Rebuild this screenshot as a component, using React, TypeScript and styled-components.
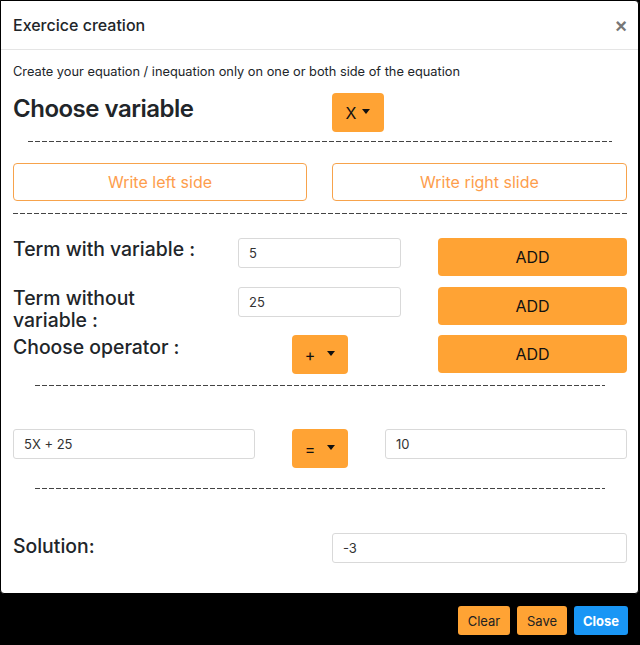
import React from "react";
import styled, { createGlobalStyle } from "styled-components";

const ORANGE = "#ffa334";

const Global = createGlobalStyle`
  html, body { margin: 0; padding: 0; background: #000; }
  body { font-family: Inter, "Liberation Sans", Arial, sans-serif; color: #212529; }
  * { box-sizing: border-box; }
`;

const Page = styled.div`
  width: 640px;
  height: 645px;
  background: #000;
  display: flex;
  flex-direction: column;
`;

const Modal = styled.div`
  width: 639px;
  height: 594px;
  background: #fff;
  border: 1px solid #000;
  border-radius: 0 4px 4px 4px;
  display: flex;
  flex-direction: column;
`;

const Header = styled.div`
  height: 49px;
  border-bottom: 1px solid #e5e5e5;
  display: flex;
  align-items: center;
  justify-content: space-between;
  padding: 0 11px 0 12px;
`;

const Title = styled.h5`
  margin: 0;
  font-size: 16px;
  font-weight: 500;
  color: #212529;
`;

const CloseX = styled.span`
  font-family: "Liberation Sans", Arial, sans-serif;
  font-size: 20px;
  font-weight: 700;
  color: #777;
  line-height: 1;
  margin-top: 2px;
`;

const Body = styled.div`
  padding: 0 11px 0 12px;
  display: flex;
  flex-direction: column;
`;

const Intro = styled.p`
  margin: 14px 0 0;
  font-size: 12.8px;
  line-height: 16px;
`;

const Spaced = styled.div<{ $top: number }>`
  margin-top: ${(p) => p.$top}px;
`;

const VarRow = styled(Spaced)`
  display: grid;
  grid-template-columns: 319px 1fr;
  align-items: start;
`;

const BigHeading = styled.h2`
  margin: 1px 0 0;
  font-size: 24px;
  line-height: 29px;
  font-weight: 600;
  letter-spacing: -0.5px;
  color: #212529;
`;

const Rule = styled.div<{ $top: number; $inset: number }>`
  margin: ${(p) => p.$top}px ${(p) => p.$inset}px 0;
  height: 1px;
  background: repeating-linear-gradient(
    to right,
    #444 0,
    #444 5px,
    transparent 5px,
    transparent 7px
  );
`;

const TwoCols = styled(Spaced)`
  display: grid;
  grid-template-columns: 294px 295px;
  column-gap: 25px;
`;

const OutlineButton = styled.button`
  height: 38px;
  background: #fff;
  border: 1px solid #f7a34c;
  border-radius: 4px;
  color: #fd9d4c;
  font-family: inherit;
  font-size: 16px;
`;

const TermRow = styled(Spaced)`
  display: grid;
  grid-template-columns: 225px 163px 1fr;
  height: 38px;
  align-items: start;
`;

const Label = styled.div<{ $top?: number }>`
  font-size: 19.4px;
  font-weight: 500;
  color: #212529;
  line-height: 22px;
  margin-top: ${(p) => p.$top ?? 0}px;
`;

const Input = styled.input`
  height: 30px;
  width: 100%;
  border: 1px solid #d9d9d9;
  border-radius: 3px;
  padding: 0 10px;
  font-family: inherit;
  font-size: 13px;
  color: #333;
  background: #fff;
  outline: none;
`;

const AddButton = styled.button`
  justify-self: end;
  width: 189px;
  height: 38px;
  background: ${ORANGE};
  border: none;
  border-radius: 4px;
  font-family: inherit;
  font-size: 16px;
  color: #111;
`;

const DropButton = styled.button<{ $w: number; $gap: number }>`
  width: ${(p) => p.$w}px;
  height: 39px;
  background: ${ORANGE};
  border: none;
  border-radius: 4px;
  font-family: inherit;
  font-size: 16px;
  color: #111;
  display: inline-flex;
  align-items: center;
  justify-content: center;
  gap: ${(p) => p.$gap}px;
`;

const Caret = styled.span`
  width: 0;
  height: 0;
  border-left: 4px solid transparent;
  border-right: 4px solid transparent;
  border-top: 5px solid #111;
  margin-top: -2px;
`;

const OpCell = styled.div`
  display: flex;
  justify-content: flex-start;
  padding-left: 54px;
`;

const EqRow = styled(Spaced)`
  display: grid;
  grid-template-columns: 242px 1fr 242px;
  align-items: start;
`;

const EqMid = styled.div`
  display: flex;
  justify-content: flex-start;
  padding-left: 37px;
`;

const SolRow = styled(Spaced)`
  display: grid;
  grid-template-columns: 319px 1fr;
  align-items: start;
`;

const Footer = styled.div`
  display: flex;
  justify-content: flex-end;
  gap: 7px;
  padding: 12px 12px 0 0;
`;

const FootButton = styled.button<{ $blue?: boolean; $w: number }>`
  width: ${(p) => p.$w}px;
  height: 29px;
  border: none;
  border-radius: 3px;
  font-family: inherit;
  font-size: 13px;
  background: ${(p) => (p.$blue ? "#1996f5" : ORANGE)};
  color: ${(p) => (p.$blue ? "#fff" : "#222")};
  font-weight: ${(p) => (p.$blue ? 700 : 400)};
`;

export default function App() {
  return (
    <>
      <Global />
      <Page>
        <Modal>
          <Header>
            <Title>Exercice creation</Title>
            <CloseX>×</CloseX>
          </Header>
          <Body>
            <Intro>Create your equation / inequation only on one or both side of the equation</Intro>
            <VarRow $top={13}>
              <BigHeading>Choose variable</BigHeading>
              <DropButton $w={52} $gap={6}>
                X <Caret />
              </DropButton>
            </VarRow>
            <Rule $top={9} $inset={15} />
            <TwoCols $top={21}>
              <OutlineButton>Write left side</OutlineButton>
              <OutlineButton>Write right slide</OutlineButton>
            </TwoCols>
            <Rule $top={12} $inset={0} />
            <TermRow $top={24}>
              <Label $top={0}>Term with variable :</Label>
              <Input defaultValue="5" />
              <AddButton>ADD</AddButton>
            </TermRow>
            <TermRow $top={11}>
              <Label>
                Term without
                <br />
                variable :
              </Label>
              <Input defaultValue="25" />
              <AddButton>ADD</AddButton>
            </TermRow>
            <TermRow $top={10}>
              <Label $top={1}>Choose operator :</Label>
              <OpCell>
                <DropButton $w={56} $gap={12}>
                  + <Caret />
                </DropButton>
              </OpCell>
              <AddButton>ADD</AddButton>
            </TermRow>
            <Rule $top={12} $inset={22} />
            <EqRow $top={43}>
              <Input defaultValue="5X + 25" />
              <EqMid>
                <DropButton $w={56} $gap={12}>
                  = <Caret />
                </DropButton>
              </EqMid>
              <Input defaultValue="10" />
            </EqRow>
            <Rule $top={20} $inset={22} />
            <SolRow $top={44}>
              <Label $top={2}>Solution:</Label>
              <Input defaultValue="-3" />
            </SolRow>
          </Body>
        </Modal>
        <Footer>
          <FootButton $w={52}>Clear</FootButton>
          <FootButton $w={50}>Save</FootButton>
          <FootButton $w={54} $blue>
            Close
          </FootButton>
        </Footer>
      </Page>
    </>
  );
}
